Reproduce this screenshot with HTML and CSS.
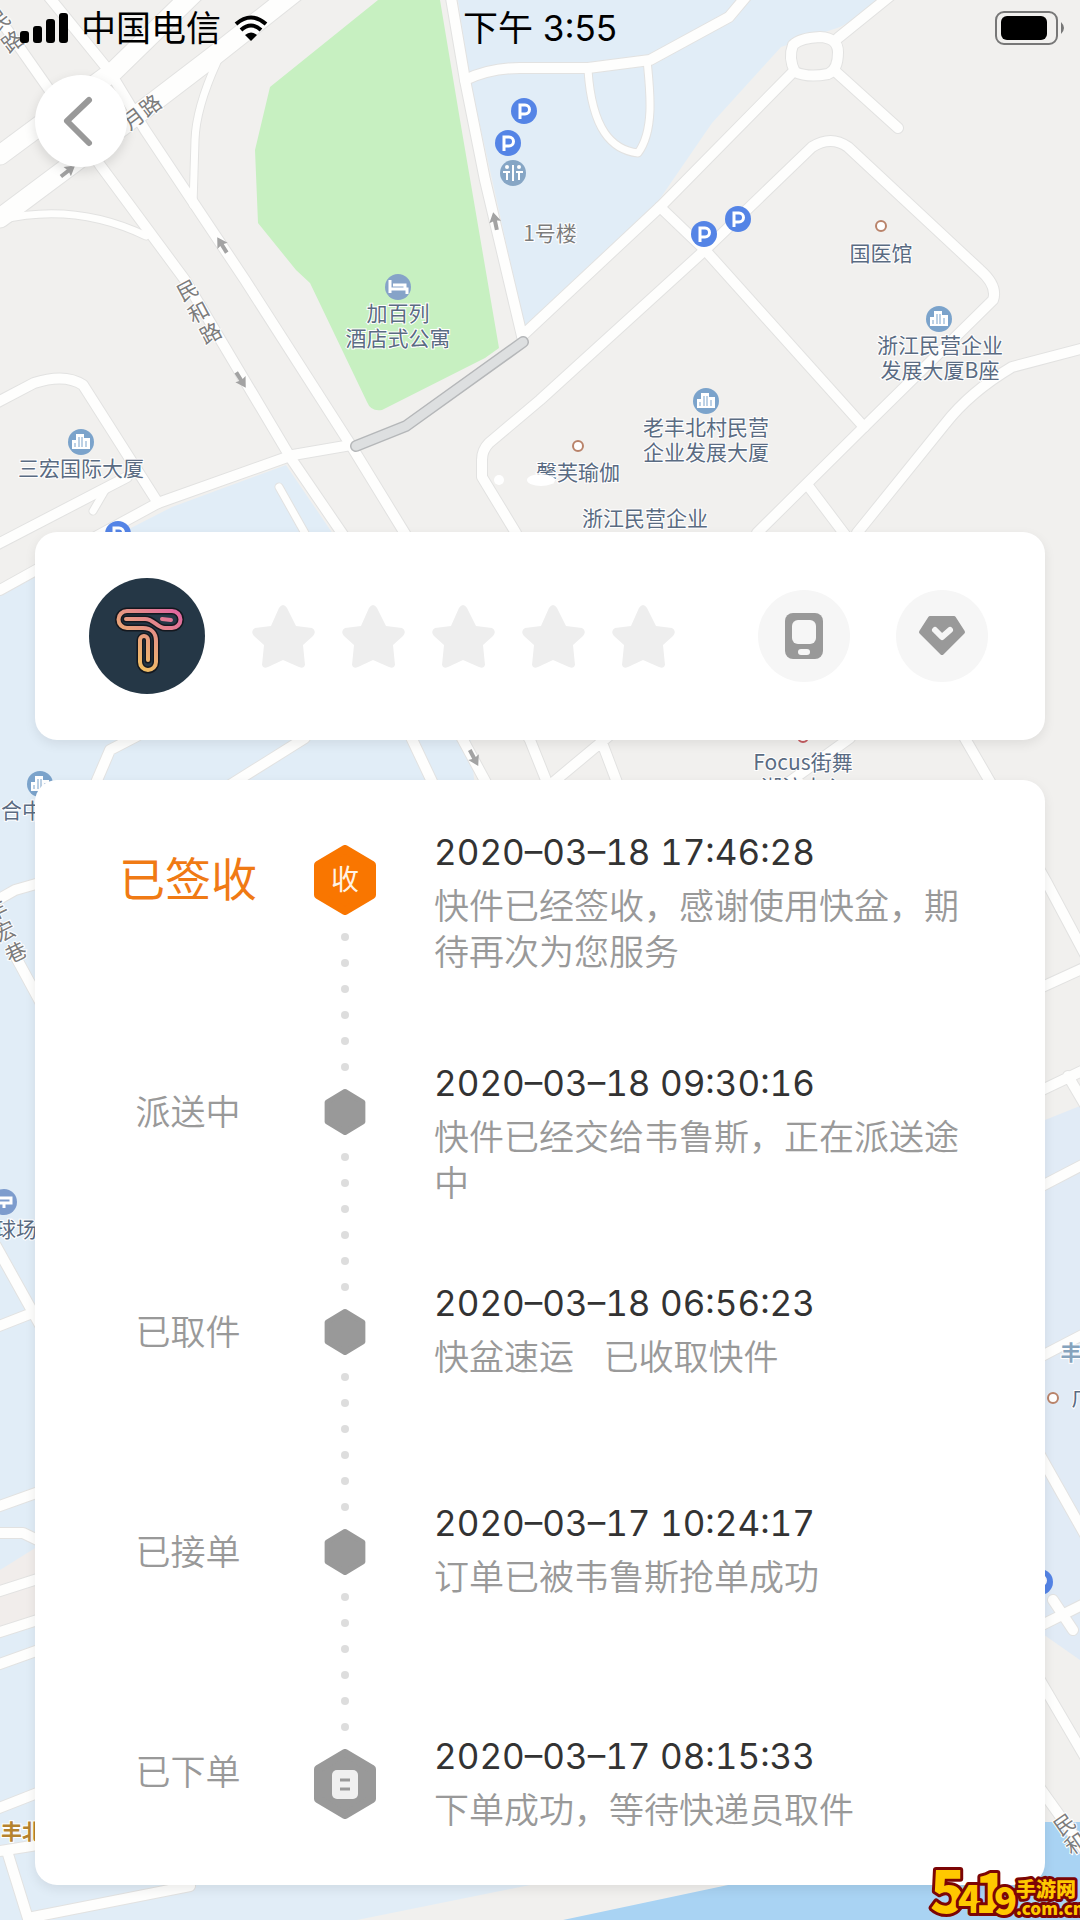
FILE: index.html
```html
<!DOCTYPE html>
<html lang="zh-CN">
<head>
<meta charset="utf-8">
<meta name="viewport" content="width=device-width, initial-scale=1">
<title>快件详情</title>
<link rel="stylesheet" href="styles.css">
</head>
<body>
<div class="screen">
  <svg class="map" viewBox="0 0 1080 1920" preserveAspectRatio="xMidYMin slice" aria-hidden="true">
    <defs>
      <g id="avenues">
        <path d="M195-8 115 70 0 155M295-8 215 55 75 162 0 218"/>
      </g>
      <g id="streets">
        <path d="M-8 8 48 88 100 165 185 280 292 460 350 545 463 740 490 790"/>
        <path d="M45-8 110 72 145 130 245 280 352 447 412 545 530 740 550 790"/>
        <path d="M450-8 465 80 485 180 522 336"/>
        <path d="M465 80Q490 68 520 68H588L650 60 729 17 750-8"/>
        <path d="M895-8 838 38M793 72 660 207 522 336M836 72 898 128"/>
        <path d="M793 45Q800 38 820 37 838 38 838 52 838 70 828 74 808 78 795 72 788 58 793 45Z"/>
        <path d="M660 207 705 250 864 427"/>
        <path d="M482 460V477L516 533M705 250 540 400 489 443Q482 450 482 460M705 250 812 147Q831 135 848 147L980 270Q998 286 993 300L864 427 757 533"/>
        <path d="M1088 347 1012 367Q970 392 945 424L857 533M809 487 846 536"/>
        <path d="M351 445 293 455 158 503 90 540 0 590"/>
        <path d="M-6 404 34 383Q65 373 83 385L158 503M127 477-6 546"/>
        <path d="M137 736 110 750 95 785M305 738 230 785M410 735 436 790M610 735 550 785M601 740 618 785M850 738 785 785M963 735 989 780 1047 883 1088 960"/>
        <path d="M-6 902 15 890 50 880M12 950 50 1020M-4 1246 40 1325M-6 1328 50 1306M-6 1508 50 1488M-6 1533H23L50 1546M-6 1593 50 1575M-6 1634 50 1616M-6 1666 50 1646M-6 1810 50 1788M-6 1852 50 1843M7 1851 30 1925M33 1917 190 1886"/>
        <path d="M1040 988 1088 966M1040 1091 1088 1068M1068 1076 1088 1110M1040 1187 1088 1162M1040 1357 1088 1332M1040 1455 1088 1540M1040 1626 1088 1602M1053 1600 1073 1630M1040 1680 1088 1762M1040 1788 1088 1855"/>
      </g>
      <g id="lanes">
        <path d="M217 62Q196 108 195 140L193 205M0 220Q75 202 146 236M588 70C592 130 612 150 638 153 655 130 650 90 647 60M107 487 93 511M279 487 306 535"/>
      </g>
      <g id="parking"><circle r="13" fill="#5484e6"/><path d="M-4 8V-6H1a4 4 0 0 1 0 9H-4" fill="none" stroke="#fff" stroke-width="3"/></g>
      <g id="tower"><circle r="13" fill="#7ba3cb"/><path d="M-9 7V-2h4v-6H3v4H9V7Z" fill="#fff"/><path d="M-6 1V5M-2-5V5M1-5V5M5-1V5" stroke="#7ba3cb" stroke-width="1"/></g>
      <path id="arrow" d="M0-9 6 1 2 0V9H-2V0L-6 1Z"/>
    </defs>
    <rect width="1080" height="1920" fill="#f1f0ee"/>
    <path fill="#e1edf7" d="M458 0H890L840 27 781 47 712 123 657 203 581 275 527 337 470 80Z"/>
    <path fill="#e1edf7" d="M0 595 172 507 286 465 470 735 475 790 100 800V1880L540 1883 357 1920H0Z"/>
    <path fill="#e1ebf6" d="M1040 1122 1080 1106V1660L1040 1632Z"/>
    <path fill="#f1edeb" d="M0 1570 40 1545V1620L0 1634Z"/>
    <path fill="#a9d3f3" d="M563 1920 728 1885 1040 1880V1822H1080V1920Z"/>
    <path fill="#c7f0c1" d="M378 0H440L460 120 499 348 485 358 382 410Q371 412 367 402L310 283 296 270 258 223 255 150 270 87Z"/>
    <g fill="none" stroke="#e2e2e1" stroke-linecap="round" stroke-linejoin="round">
      <use href="#avenues" stroke-width="21"/><use href="#streets" stroke-width="12"/><use href="#lanes" stroke-width="9"/>
    </g>
    <g fill="none" stroke="#fefefd" stroke-linecap="round" stroke-linejoin="round">
      <use href="#avenues" stroke-width="19"/><use href="#streets" stroke-width="10"/><use href="#lanes" stroke-width="7"/>
    </g>
    <g fill="none" stroke-linecap="round" stroke-linejoin="round">
      <path d="M356 446 406 426 523 342" stroke="#b5b7b9" stroke-width="12"/>
      <path d="M356 446 406 426 523 342" stroke="#dddfe0" stroke-width="9"/>
    </g>
    <g fill="#a3a3a3">
      <use href="#arrow" transform="translate(68 171) rotate(52)"/>
      <use href="#arrow" transform="translate(222 245) rotate(-32)"/>
      <use href="#arrow" transform="translate(495 221) rotate(-12)"/>
      <use href="#arrow" transform="translate(241 380) rotate(148)"/>
      <use href="#arrow" transform="translate(474 758) rotate(152)"/>
    </g>
    <use href="#parking" x="524" y="111"/><use href="#parking" x="508" y="143"/>
    <use href="#parking" x="704" y="234"/><use href="#parking" x="738" y="219"/>
    <use href="#parking" x="118" y="534"/><use href="#parking" x="1040" y="1582"/>
    <use href="#tower" x="81" y="442"/><use href="#tower" x="939" y="319"/>
    <use href="#tower" x="706" y="401"/><use href="#tower" x="40" y="784"/>
    <circle cx="513" cy="173" r="13" fill="#86a6c5"/>
    <path d="M513 165V181M507 171V180M519 171V180M503 172H510M516 172H523" stroke="#fff" stroke-width="2"/>
    <circle cx="507" cy="167" r="2" fill="#fff"/><circle cx="519" cy="167" r="2" fill="#fff"/>
    <circle cx="398" cy="287" r="13" fill="#86a3c8"/>
    <path d="M390 280V293M390 289H407V294M393 285H405V288" fill="none" stroke="#fff" stroke-width="3"/>
    <circle cx="4" cy="1202" r="13" fill="#7d9ccd"/><path d="M-4 1198H11V1203H-4M4 1203V1208" fill="none" stroke="#fff" stroke-width="3"/>
    <g fill="#fff" stroke="#b9836a" stroke-width="2">
      <circle cx="881" cy="226" r="5"/><circle cx="578" cy="446" r="5"/><circle cx="1053" cy="1398" r="5"/><circle cx="803" cy="737" r="5" stroke="#c55c60"/>
    </g>
    <g class="place">
      <text x="398" y="321">加百列</text><text x="398" y="346">酒店式公寓</text>
      <text x="81" y="476">三宏国际大厦</text>
      <text x="881" y="261">国医馆</text>
      <text x="940" y="353">浙江民营企业</text><text x="940" y="378">发展大厦B座</text>
      <text x="706" y="435">老丰北村民营</text><text x="706" y="460">企业发展大厦</text>
      <text x="578" y="480">馨芙瑜伽</text>
      <text x="645" y="526">浙江民营企业</text>
      <text x="803" y="770">Focus街舞</text><text x="803" y="795">潮流中心</text>
      <text x="22" y="818">合中</text><text x="16" y="1237">球场</text>
      <text x="1082" y="1405">广</text>
    </g>
    <text class="place place--area" x="1071" y="1360">丰</text>
    <text class="place place--metro" x="22" y="1839">丰北</text>
    <g class="road-name">
      <text x="550" y="241">1号楼</text>
      <text transform="translate(134 119) rotate(-37)" y="7">月</text><text transform="translate(151 106) rotate(-37)" y="7">路</text>
      <text transform="translate(0 21) rotate(-37)" y="7">民</text><text transform="translate(13 42) rotate(-37)" y="7">路</text>
      <text transform="translate(188 291) rotate(-28)" y="7">民</text><text transform="translate(199 313) rotate(-28)" y="7">和</text><text transform="translate(211 334) rotate(-28)" y="7">路</text>
      <text transform="translate(-3 911) rotate(-26)" y="7">丰</text><text transform="translate(5 932) rotate(-26)" y="7">宏</text><text transform="translate(16 953) rotate(-26)" y="7">巷</text>
      <text transform="translate(1065 1825) rotate(-35)" y="7">民</text><text transform="translate(1076 1844) rotate(-35)" y="7">和</text>
    </g>
    <g fill="#fff"><circle cx="499" cy="480" r="5"/><ellipse cx="541" cy="480" rx="14" ry="6"/></g>
  </svg>

  <header class="status">
    <div class="status__left">
      <svg class="status__bars" viewBox="0 0 48 30" aria-label="信号"><rect y="18" width="9" height="12" rx="3"/><rect x="13" y="13" width="9" height="17" rx="3"/><rect x="26" y="6" width="9" height="24" rx="3"/><rect x="39" width="9" height="30" rx="3"/></svg>
      <span>中国电信</span>
      <svg class="status__wifi" viewBox="0 0 34 27" aria-label="无线网络"><path d="M2 9Q17-4 32 9M7 15Q17 6 27 15" fill="none" stroke="#000" stroke-width="4"/><path d="M11 20Q17 15 23 20L17 26Z"/></svg>
    </div>
    <time class="status__time">下午 3:55</time>
    <svg class="status__battery" viewBox="0 0 72 34" aria-label="电量"><rect x="1" y="1" width="61" height="32" rx="8" fill="none" stroke="#777" stroke-width="2"/><rect x="6" y="5" width="46" height="24" rx="6"/><path d="M66 11q6 6 0 12z" fill="#777"/></svg>
  </header>

  <nav class="nav">
    <button class="back" type="button" aria-label="返回"><svg viewBox="0 0 92 92"><path d="M54 25 32 46 54 68" fill="none" stroke="#999" stroke-width="6" stroke-linecap="round" stroke-linejoin="round"/></svg></button>
  </nav>

  <main class="content">
    <section class="card courier">
      <svg class="courier__logo" viewBox="0 0 116 116" role="img" aria-label="快递员">
        <defs><linearGradient id="glow" gradientUnits="userSpaceOnUse" x1="45" y1="92" x2="88" y2="34"><stop stop-color="#f2c45f"/><stop offset=".5" stop-color="#e79a80"/><stop offset="1" stop-color="#e0689f"/></linearGradient></defs>
        <circle cx="58" cy="58" r="58" fill="#253746"/>
        <path d="M37 41H56C65 41 68 50 76 50H83A8 8 0 0 0 83 33H38A8 8 0 0 0 38 50H54C62 50 67 55 67 63V84A8 8 0 0 1 51 84V62A4 4 0 0 1 59 62V82" fill="none" stroke="#14181f" stroke-width="7" stroke-linecap="round"/>
        <path d="M37 41H56C65 41 68 50 76 50H83A8 8 0 0 0 83 33H38A8 8 0 0 0 38 50H54C62 50 67 55 67 63V84A8 8 0 0 1 51 84V62A4 4 0 0 1 59 62V82M73 41 82 42" fill="none" stroke="url(#glow)" stroke-width="4" stroke-linecap="round"/>
      </svg>
      <div class="stars" role="group" aria-label="评分">
        <button type="button" class="star" aria-label="1星"><svg viewBox="0 0 63 63"><path d="M27 3Q31-3 35 3L44 21 60 23Q65 26 61 31L51 40 53 60Q52 64 47 62L31 55 16 62Q11 64 10 60L12 40 2 31Q-2 26 3 23L19 21Z"/></svg></button>
        <button type="button" class="star" aria-label="2星"><svg viewBox="0 0 63 63"><path d="M27 3Q31-3 35 3L44 21 60 23Q65 26 61 31L51 40 53 60Q52 64 47 62L31 55 16 62Q11 64 10 60L12 40 2 31Q-2 26 3 23L19 21Z"/></svg></button>
        <button type="button" class="star" aria-label="3星"><svg viewBox="0 0 63 63"><path d="M27 3Q31-3 35 3L44 21 60 23Q65 26 61 31L51 40 53 60Q52 64 47 62L31 55 16 62Q11 64 10 60L12 40 2 31Q-2 26 3 23L19 21Z"/></svg></button>
        <button type="button" class="star" aria-label="4星"><svg viewBox="0 0 63 63"><path d="M27 3Q31-3 35 3L44 21 60 23Q65 26 61 31L51 40 53 60Q52 64 47 62L31 55 16 62Q11 64 10 60L12 40 2 31Q-2 26 3 23L19 21Z"/></svg></button>
        <button type="button" class="star" aria-label="5星"><svg viewBox="0 0 63 63"><path d="M27 3Q31-3 35 3L44 21 60 23Q65 26 61 31L51 40 53 60Q52 64 47 62L31 55 16 62Q11 64 10 60L12 40 2 31Q-2 26 3 23L19 21Z"/></svg></button>
      </div>
      <div class="actions">
        <button type="button" class="action" aria-label="电话"><svg viewBox="0 0 92 92"><rect x="27" y="23" width="38" height="46" rx="8" fill="#999"/><rect x="34" y="30" width="24" height="24" rx="6" fill="#f6f6f6"/><rect x="40" y="59" width="12" height="6" rx="3" fill="#f6f6f6"/></svg></button>
        <button type="button" class="action" aria-label="打赏"><svg viewBox="0 0 92 92"><path d="M34 28H58L67 42 46 63 25 42Z" fill="#999" stroke="#999" stroke-width="4" stroke-linejoin="round"/><path d="M39 40 46 47 54 40" fill="none" stroke="#f6f6f6" stroke-width="6" stroke-linecap="round" stroke-linejoin="round"/></svg></button>
      </div>
    </section>

    <section class="card track">
      <ol class="steps">
        <li class="step step--end step--current">
          <span class="step__label">已签收</span>
          <div class="rail">
            <div class="node"><svg viewBox="0 0 62 70"><path d="M31 4 58 20V50L31 66 4 50V20Z"/></svg><span class="node__text">收</span></div>
            <div class="dots"><i></i><i></i><i></i><i></i><i></i><i></i></div>
          </div>
          <div class="step__body"><time>2020–03–18 17:46:28</time><p>快件已经签收，感谢使用快盆，期待再次为您服务</p></div>
        </li>
        <li class="step">
          <span class="step__label">派送中</span>
          <div class="rail">
            <div class="node"><svg viewBox="0 0 62 70"><path d="M31 4 58 20V50L31 66 4 50V20Z"/></svg></div>
            <div class="dots"><i></i><i></i><i></i><i></i><i></i><i></i></div>
          </div>
          <div class="step__body"><time>2020–03–18 09:30:16</time><p>快件已经交给韦鲁斯，正在派送途中</p></div>
        </li>
        <li class="step">
          <span class="step__label">已取件</span>
          <div class="rail">
            <div class="node"><svg viewBox="0 0 62 70"><path d="M31 4 58 20V50L31 66 4 50V20Z"/></svg></div>
            <div class="dots"><i></i><i></i><i></i><i></i><i></i><i></i></div>
          </div>
          <div class="step__body"><time>2020–03–18 06:56:23</time><p>快盆速运&nbsp;&nbsp; 已收取快件</p></div>
        </li>
        <li class="step">
          <span class="step__label">已接单</span>
          <div class="rail">
            <div class="node"><svg viewBox="0 0 62 70"><path d="M31 4 58 20V50L31 66 4 50V20Z"/></svg></div>
            <div class="dots"><i></i><i></i><i></i><i></i><i></i><i></i></div>
          </div>
          <div class="step__body"><time>2020–03–17 10:24:17</time><p>订单已被韦鲁斯抢单成功</p></div>
        </li>
        <li class="step step--end">
          <span class="step__label">已下单</span>
          <div class="rail">
            <div class="node"><svg viewBox="0 0 62 70"><path d="M31 4 58 20V50L31 66 4 50V20Z"/><rect class="node__sheet" x="18" y="21" width="26" height="29" rx="5"/><path class="node__lines" d="M26 31H36M26 40H36"/></svg></div>
          </div>
          <div class="step__body"><time>2020–03–17 08:15:33</time><p>下单成功，等待快递员取件</p></div>
        </li>
      </ol>
    </section>
  </main>

  <svg class="watermark" viewBox="0 0 152 56" role="img" aria-label="5419手游网 .com.cn">
    <g class="watermark__text">
      <text y="49" font-size="38"><tspan x="2" font-size="58">5</tspan><tspan x="30">4</tspan><tspan x="47" font-size="54">1</tspan><tspan x="66" y="51">9</tspan></text>
      <text x="88" y="33" font-size="20">手游网</text>
      <text x="88" y="51" font-size="17">.com.cn</text>
    </g>
  </svg>
</div>
</body>
</html>
```
FILE: styles.css
```css
* { box-sizing: border-box; }

body {
  margin: 0;
  background: #f1f0ee;
  color: #333;
  font-family: Inter, "Noto Sans CJK SC", sans-serif;
}

button {
  padding: 0;
  border: 0;
  background: none;
  cursor: pointer;
}

svg { display: block; }

.screen {
  position: relative;
  min-height: 100vh;
  padding-bottom: 35px;
  overflow: hidden;
}

.map {
  position: absolute;
  inset: 0;
  width: 100%;
  height: 100%;
}

.place,
.road-name {
  font-family: "Noto Sans CJK SC", sans-serif;
  font-size: 21px;
  text-anchor: middle;
  fill: #5a6b82;
  stroke: #fff;
  stroke-width: 2px;
  paint-order: stroke;
}

.road-name { fill: #7c7c7c; }
.place--area { fill: #86a3bd; font-weight: 700; }
.place--metro { fill: #b5832f; font-weight: 700; }

/* status bar */
.status {
  position: relative;
  display: grid;
  grid-template-columns: 1fr auto 1fr;
  align-items: center;
  height: 56px;
  padding: 0 13px;
  color: #000;
  font-size: 35px;
  line-height: 56px;
}

.status__left {
  display: flex;
  align-items: center;
  gap: 13px;
  padding-left: 7px;
}

.status__bars { width: 48px; height: 30px; }
.status__wifi { width: 34px; height: 27px; }
.status__battery { width: 72px; height: 34px; justify-self: end; }

.nav {
  position: relative;
  padding: 19px 35px 0;
}

.back {
  display: block;
  width: 92px;
  height: 92px;
  border-radius: 50%;
  background: #fff;
  box-shadow: 0 4px 12px rgba(0, 0, 0, .12);
}

.content {
  position: relative;
  display: flex;
  flex-direction: column;
  gap: 40px;
  padding: 365px 35px 0;
}

.card {
  border-radius: 22px;
  background: #fff;
  box-shadow: 0 4px 12px rgba(0, 0, 0, .08);
}

/* courier */
.courier {
  display: flex;
  align-items: center;
  padding: 46px 57px 46px 54px;
}

.courier__logo {
  width: 116px;
  height: 116px;
  margin-right: 47px;
}

.stars {
  display: flex;
  gap: 27px;
}

.star {
  width: 63px;
  height: 63px;
  fill: #eee;
}

.actions {
  display: flex;
  gap: 46px;
  margin-left: auto;
}

.action {
  width: 92px;
  height: 92px;
  border-radius: 50%;
  background: #f6f6f6;
}

/* timeline */
.track { padding: 65px 73px 52px 50px; }

.steps {
  margin: 0;
  padding: 0;
  list-style: none;
}

.step {
  display: grid;
  grid-template-columns: 206px 108px 1fr;
  align-items: start;
}

.step__label {
  color: #999;
  font-size: 35px;
  font-weight: 350;
  line-height: 46px;
  text-align: center;
}

.step--current .step__label {
  color: #f07a14;
  font-size: 46px;
  font-weight: 400;
  line-height: 68px;
}

.rail {
  display: flex;
  flex-direction: column;
  align-items: center;
}

.node {
  display: grid;
  place-items: center;
  width: 42px;
  height: 46px;
  fill: #999;
  stroke: #999;
  stroke-width: 8px;
  stroke-linejoin: round;
}

.node > * { grid-area: 1 / 1; }
.node svg { width: 100%; height: 100%; }
.step--end .node { width: 62px; height: 70px; }
.step--current .node { fill: #f97600; stroke: #f97600; }

.node__text {
  color: #fff3e6;
  font-size: 28px;
  line-height: 28px;
}

.node__sheet { fill: #f0f0f0; stroke: none; }
.node__lines { stroke-width: 3px; }

.dots {
  display: flex;
  flex-direction: column;
  gap: 18px;
  padding: 18px 0;
}

.dots i {
  width: 8px;
  height: 8px;
  border-radius: 50%;
  background: #ddd;
}

.step__body {
  margin-top: -29px;
  padding-left: 35px;
}

.step--end .step__body { margin-top: -16px; }

.step__body time {
  display: block;
  font-size: 35px;
  font-variant-numeric: tabular-nums;
  line-height: 46px;
}

.step__body p {
  margin: 8px 0 0;
  color: #999;
  font-size: 35px;
  font-weight: 350;
  line-height: 46px;
}

.watermark {
  position: absolute;
  right: 0;
  bottom: 0;
  width: 152px;
  height: 56px;
}

.watermark__text {
  font-family: "Noto Sans CJK SC", sans-serif;
  font-weight: 900;
  fill: #ffc800;
  stroke: #7c0505;
  stroke-width: 6px;
  stroke-linejoin: round;
  paint-order: stroke;
}
```
